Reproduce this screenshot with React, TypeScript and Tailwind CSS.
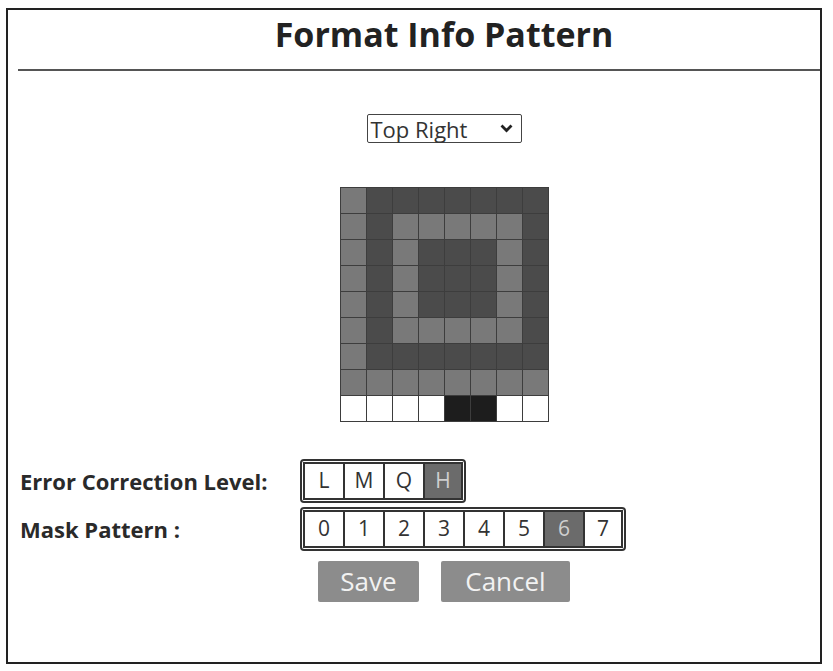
const LIGHT = "L";
const DARK = "D";

const pattern: string[] = [
  "LDDDDDDD",
  "LDLLLLLD",
  "LDLDDDLD",
  "LDLDDDLD",
  "LDLDDDLD",
  "LDLLLLLD",
  "LDDDDDDD",
  "LLLLLLLL",
  "WWWWBBWW",
];

const cellClass = (c: string) => {
  if (c === LIGHT) return "bg-[#797979]";
  if (c === DARK) return "bg-[#4b4b4b]";
  if (c === "B") return "bg-[#1d1d1d]";
  return "bg-white";
};

const Segmented = ({ items, active }: { items: string[]; active: string }) => (
  <div className="flex rounded-[4px] border-2 border-[#333] p-px">
    {items.map((item, i) => (
      <div
        key={item}
        className={`flex h-[38px] w-[40px] items-center justify-center border-y-2 border-l-2 border-[#333] text-[21px] ${
          i === items.length - 1 ? "border-r-2" : ""
        } ${item === active ? "bg-[#6b6b6b] text-[#cfcfcf]" : "bg-white text-[#333]"}`}
      >
        {item}
      </div>
    ))}
  </div>
);

export default function App() {
  return (
    <div className="h-[671px] w-[833px] bg-white pt-[8px] pl-[6px] font-['Open_Sans',sans-serif]">
      <div className="flex h-[656px] w-[816px] flex-col border-2 border-[#222]">
        {/* header */}
        <div className="flex h-[48px] justify-center pl-[60px]">
          <h1 className="text-[34px] leading-[48px] font-bold text-[#222]">Format Info Pattern</h1>
        </div>
        <div className="mt-[11px] ml-[10px] h-[2px] bg-[#555]" />

        {/* position select */}
        <div className="mt-[43px] flex justify-center pl-[60px]">
          <div className="flex h-[29px] w-[155px] items-center justify-between rounded-[2px] border border-[#444] pr-[8px] pl-[3px] text-[22px] text-[#333]">
            <span className="leading-none">Top Right</span>
            <svg width="13" height="9" viewBox="0 0 13 9" fill="none">
              <path d="M1.5 1.5 L6.5 6.5 L11.5 1.5" stroke="#222" strokeWidth="2.8" />
            </svg>
          </div>
        </div>

        {/* format info grid */}
        <div className="mt-[44px] flex justify-center pl-[60px]">
          <div className="grid grid-cols-[repeat(8,25px)] grid-rows-[repeat(9,25px)] gap-px bg-[#3d3d3d] p-px">
            {pattern.flatMap((row, r) =>
              row.split("").map((c, col) => <div key={`${r}-${col}`} className={cellClass(c)} />)
            )}
          </div>
        </div>

        {/* options */}
        <div className="mt-[37px] flex flex-col gap-[4px] pl-[12px]">
          <div className="flex items-center">
            <div className="w-[280px] text-[22px] font-bold text-[#2a2a2a]">Error Correction Level:</div>
            <Segmented items={["L", "M", "Q", "H"]} active="H" />
          </div>
          <div className="flex items-center">
            <div className="w-[280px] text-[22px] font-bold text-[#2a2a2a]">Mask Pattern :</div>
            <Segmented items={["0", "1", "2", "3", "4", "5", "6", "7"]} active="6" />
          </div>
        </div>

        <div className="mt-[10px] flex gap-[22px] pl-[310px]">
          <button className="h-[41px] w-[101px] rounded-[2px] bg-[#8c8c8c] text-[26px] text-[#f2f2f2]">Save</button>
          <button className="h-[41px] w-[129px] rounded-[2px] bg-[#8c8c8c] text-[26px] text-[#f2f2f2]">Cancel</button>
        </div>
      </div>
    </div>
  );
}
